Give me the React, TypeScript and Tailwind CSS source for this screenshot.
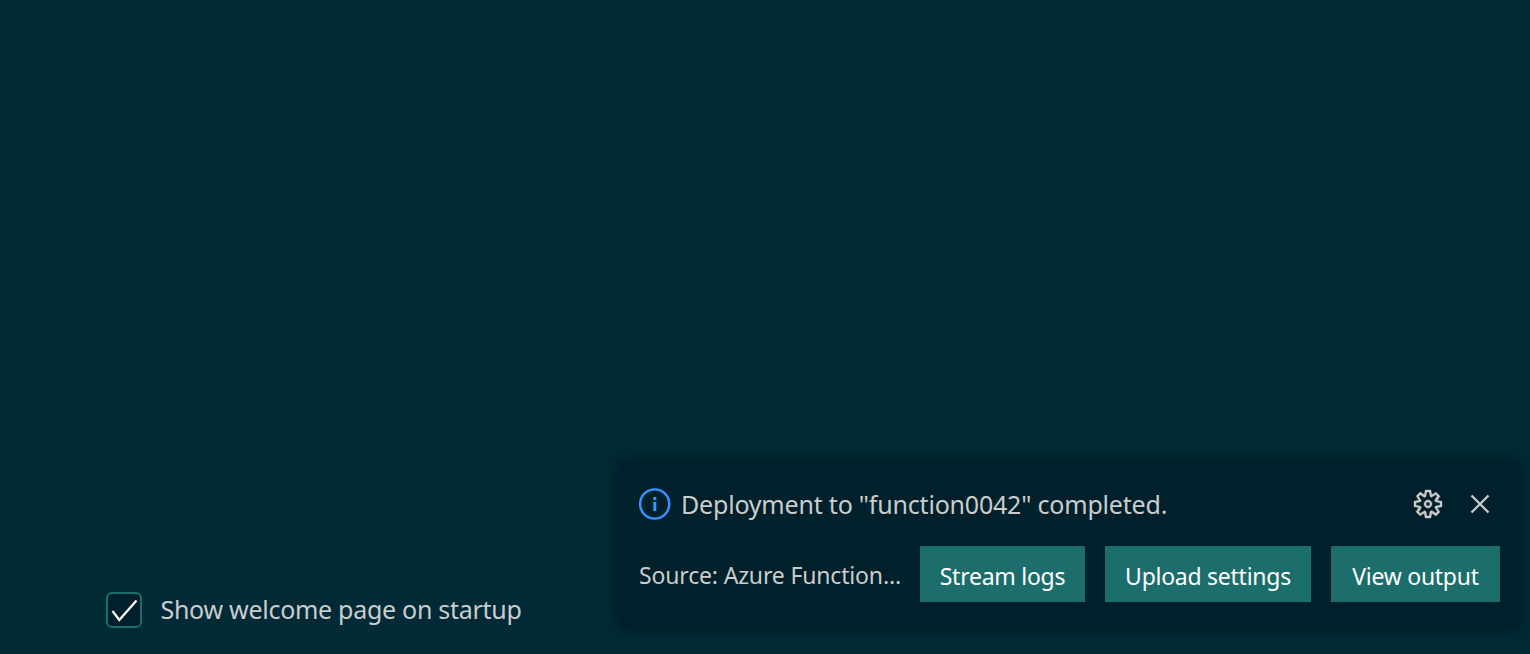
import React from "react";

const ui = "font-['Noto_Sans','Open_Sans',sans-serif]";

function InfoIcon() {
  return (
    <svg className="h-8 w-8 shrink-0" viewBox="0 0 32 32" fill="none">
      <circle cx="15.700" cy="16" r="14.600" stroke="#3794ff" strokeWidth="2.400" />
      <path d="M14.300 9h3v3h-3zM14.300 14h3v9h-3z" fill="#3794ff" />
    </svg>
  );
}

function GearIcon() {
  return (
    <svg className="h-8 w-8" viewBox="0 0 16 16" fill="#cccccc" stroke="#cccccc" strokeWidth="0.2">
      <path
        fillRule="evenodd"
        clipRule="evenodd"
        d="M9.1 4.4L8.6 2H7.4l-.5 2.4-.7.3-2-1.3-.9.8 1.3 2-.2.7-2.4.5v1.2l2.4.5.3.8-1.3 2 .8.8 2-1.3.8.3.4 2.3h1.2l.5-2.4.8-.3 2 1.3.8-.8-1.3-2 .3-.8 2.3-.4V7.4l-2.4-.5-.3-.8 1.3-2-.8-.8-2 1.3-.7-.2zM9.4 1l.5 2.4L12 2.1l2 2-1.4 2.1 2.4.4v2.8l-2.4.5L14 12l-2 2-2.1-1.4-.5 2.4H6.6l-.5-2.4L4 13.9l-2-2 1.4-2.1L1 9.4V6.6l2.4-.5L2.1 4l2-2 2.1 1.4.4-2.4h2.8zm.6 7c0 1.1-.9 2-2 2s-2-.9-2-2 .9-2 2-2 2 .9 2 2zM8 9c.6 0 1-.4 1-1s-.4-1-1-1-1 .4-1 1 .4 1 1 1z"
      />
    </svg>
  );
}

function CloseIcon() {
  return (
    <svg className="h-8 w-8" viewBox="0 0 32 32" fill="none" stroke="#cccccc" strokeWidth="2.2">
      <path d="M7.500 7.500 24.500 24.500M24.500 7.500 7.500 24.500" />
    </svg>
  );
}

function Action({ label, size }: { label: string; size: string }) {
  return (
    <button className={`flex h-14 shrink-0 items-center justify-center whitespace-nowrap bg-[#1b6e6b] pt-1 text-white ${size}`}>
      {label}
    </button>
  );
}

export default function App() {
  return (
    <main className={`flex h-[654px] w-[1530px] flex-col overflow-hidden bg-[#002b36] text-[#cccccc] ${ui}`}>
      <div className="flex flex-1 items-end justify-between pr-[10px] pb-[26px]">
        <label className="flex items-center pl-[106px]">
          <span className="flex h-9 w-9 items-center justify-center rounded-md border-2 border-[#1b6e6b] bg-[#00212b]">
            <svg className="h-8 w-8 shrink-0" viewBox="0 0 32 32" fill="none" stroke="white" strokeWidth="2.3">
              <path d="m4.500 17 6.800 9L28.500 6.500" />
            </svg>
          </span>
          <span className="-mt-[3px] ml-[18.500px] whitespace-nowrap text-[25px] leading-9 tracking-[-0.28px]">Show welcome page on startup</span>
        </label>
        <section className="h-[166px] w-[901px] shrink-0 bg-[#00212b] pl-5 pt-[22px] shadow-[0_0_16px_2px_rgba(0,0,0,0.36)]">
          <div className="flex h-10 items-center">
            <InfoIcon />
            <span className="mt-[2px] ml-[10px] flex-1 whitespace-nowrap text-[25px] tracking-[-0.2px]">
              Deployment to "function0042" completed.
            </span>
            <div className="flex gap-5 pr-6">
              <GearIcon />
              <CloseIcon />
            </div>
          </div>
          <div className="mt-[22px] flex text-[23px] tracking-[-0.26px]">
            <span className="w-[281px] shrink-0 pt-3 whitespace-nowrap tracking-[-0.16px]">Source: Azure Function...</span>
            <div className="flex gap-5">
              <Action label="Stream logs" size="w-[165px]" />
              <Action label="Upload settings" size="w-[206px]" />
              <Action label="View output" size="w-[169px]" />
            </div>
          </div>
        </section>
      </div>
    </main>
  );
}
